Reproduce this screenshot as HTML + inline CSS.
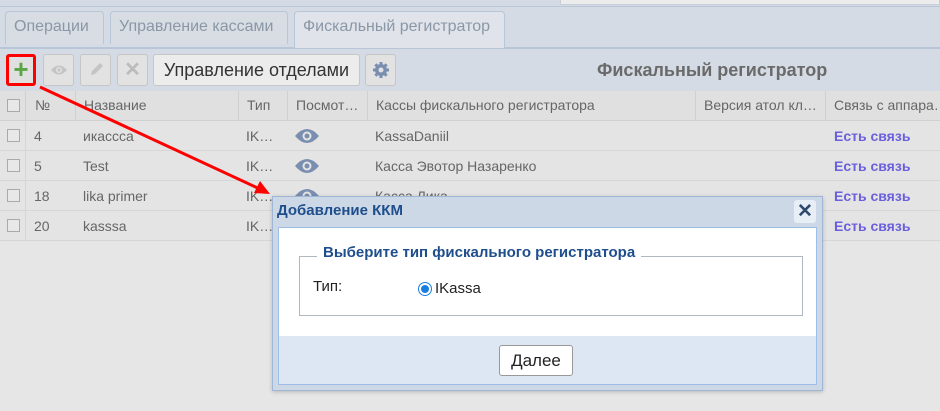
<!DOCTYPE html>
<html><head><meta charset="utf-8"><style>
*{box-sizing:border-box;margin:0;padding:0}
body{width:940px;height:411px;overflow:hidden;background:#e6e6e6;font-family:"Liberation Sans",sans-serif;font-size:14px;color:#666;position:relative}
.abs{position:absolute}
.tab{position:absolute;top:11px;height:33px;border:1px solid #b8c6d8;border-bottom:none;border-radius:4px 4px 0 0;background:#d8dde4;color:#8a97a6;font-size:16px;line-height:30px;padding:0 8px}
.btn{position:absolute;top:54px;height:32px;border:1px solid #c6c6c6;border-radius:3px;background:#e2e2e2;color:#bbb;text-align:center;line-height:30px}
.cell{position:absolute;white-space:nowrap;overflow:hidden}
.row{position:absolute;left:0;width:940px;height:30px;border-bottom:1px solid #d6d6d6;background:#e4e4e4}
.cb{position:absolute;left:7px;top:8px;width:13px;height:13px;border:1px solid #aaa;background:#e8e8e8}
.link{color:#6a5fdc;font-weight:bold}
</style></head><body>
<div class="abs" style="left:0;top:0;width:940px;height:48px;background:#d4dbe4;border-bottom:1px solid #b8c6d8"></div>
<div class="abs" style="left:560px;top:0;width:380px;height:5px;background:#ececec;border:1px solid #c8cfd8;border-top:none"></div>
<div class="abs" style="left:0;top:6px;width:940px;height:1px;background:#b8c6d8"></div>
<div class="tab" style="left:5px;width:99px">Операции</div>
<div class="tab" style="left:110px;width:178px">Управление кассами</div>
<div class="tab" style="left:294px;width:211px;background:#e0e4ea;height:38px">Фискальный регистратор</div>
<div class="abs" style="left:0;top:48px;width:940px;height:43px;background:#d4dbe4;border-top:1px solid #b8c6d8"></div>
<div class="btn" style="left:6px;width:30px;border:3px solid #f00;color:#5aa545;font-size:26px;font-weight:bold;line-height:24px;background:#e0e0e0">+</div>
<div class="btn" style="left:43px;width:31px"><svg width="18" height="12" style="margin-top:9px" viewBox="0 0 18 12"><path d="M1 6Q9-3 17 6Q9 15 1 6Z" fill="#c4c4c4"/><circle cx="9" cy="6" r="3" fill="#e2e2e2"/><circle cx="9" cy="6" r="1.6" fill="#c4c4c4"/></svg></div>
<div class="btn" style="left:80px;width:31px"><svg width="16" height="16" style="margin-top:7px" viewBox="0 0 16 16"><path d="M3 13l1-4 8-8 3 3-8 8z" fill="#c4c4c4"/></svg></div>
<div class="btn" style="left:117px;width:31px;font-size:20px;font-weight:bold">✕</div>
<div class="btn" style="left:153px;width:207px;color:#333;font-size:18px;background:#ececec">Управление отделами</div>
<div class="btn" style="left:365px;width:31px"><svg width="18" height="18" style="margin-top:6px" viewBox="0 0 18 18"><g fill="#7a8fb0"><circle cx="9" cy="9" r="6"/><rect x="7.5" y="1" width="3" height="16"/><rect x="1" y="7.5" width="16" height="3"/><rect x="7.5" y="1" width="3" height="16" transform="rotate(45 9 9)"/><rect x="7.5" y="1" width="3" height="16" transform="rotate(-45 9 9)"/></g><circle cx="9" cy="9" r="2.5" fill="#e2e2e2"/></svg></div>
<div class="abs" style="left:597px;top:60px;font-size:18px;font-weight:bold;color:#6a6a6a">Фискальный регистратор</div>
<div class="abs" style="left:0;top:91px;width:940px;height:30px;background:#e0e0e0;border-bottom:1px solid #d0d0d0"></div>
<div class="cb" style="top:99px"></div>
<div class="cell" style="left:25px;top:91px;height:30px;border-left:1px solid #d0d0d0;padding-left:9px;line-height:29px">№</div>
<div class="cell" style="left:75px;top:91px;height:30px;border-left:1px solid #d0d0d0;padding-left:8px;line-height:29px;width:163px">Название</div>
<div class="cell" style="left:238px;top:91px;height:30px;border-left:1px solid #d0d0d0;padding-left:8px;line-height:29px">Тип</div>
<div class="cell" style="left:287px;top:91px;height:30px;border-left:1px solid #d0d0d0;padding-left:8px;line-height:29px;width:80px">Посмот…</div>
<div class="cell" style="left:367px;top:91px;height:30px;border-left:1px solid #d0d0d0;padding-left:8px;line-height:29px;width:328px">Кассы фискального регистратора</div>
<div class="cell" style="left:695px;top:91px;height:30px;border-left:1px solid #d0d0d0;padding-left:8px;line-height:29px;width:130px">Версия атол кл…</div>
<div class="cell" style="left:825px;top:91px;height:30px;border-left:1px solid #d0d0d0;padding-left:8px;line-height:29px;width:115px">Связь с аппара…</div>

<div class="row" style="top:121px"><div class="cb"></div><span class="cell" style="left:34px;top:7px">4</span><span class="cell" style="left:83px;top:7px">икассса</span><span class="cell" style="left:246px;top:7px">IK…</span><span class="cell" style="left:375px;top:7px">KassaDaniil</span><span class="cell link" style="left:834px;top:7px">Есть связь</span></div>
<div class="row" style="top:151px"><div class="cb"></div><span class="cell" style="left:34px;top:7px">5</span><span class="cell" style="left:83px;top:7px">Test</span><span class="cell" style="left:246px;top:7px">IK…</span><span class="cell" style="left:375px;top:7px">Касса Эвотор Назаренко</span><span class="cell link" style="left:834px;top:7px">Есть связь</span></div>
<div class="row" style="top:181px"><div class="cb"></div><span class="cell" style="left:34px;top:7px">18</span><span class="cell" style="left:83px;top:7px">lika primer</span><span class="cell" style="left:246px;top:7px">IK…</span><span class="cell" style="left:375px;top:7px">Касса Лика</span><span class="cell link" style="left:834px;top:7px">Есть связь</span></div>
<div class="row" style="top:211px"><div class="cb"></div><span class="cell" style="left:34px;top:7px">20</span><span class="cell" style="left:83px;top:7px">kasssa</span><span class="cell" style="left:246px;top:7px">IK…</span><span class="cell link" style="left:834px;top:7px">Есть связь</span></div>
<div class="abs" style="left:25px;top:121px;width:1px;height:120px;background:#d6d6d6"></div>
<svg class="abs" style="left:294px;top:126px" width="26" height="80" viewBox="0 0 26 80"><g fill="#7a8fb0"><path d="M1 10Q13-4 25 10Q13 24 1 10Z"/><path d="M1 40Q13 26 25 40Q13 54 1 40Z"/><path d="M1 70Q13 56 25 70Q13 84 1 70Z"/></g><g fill="#e4e4e4"><circle cx="13" cy="10" r="4.5"/><circle cx="13" cy="40" r="4.5"/><circle cx="13" cy="70" r="4.5"/></g><g fill="#7a8fb0"><circle cx="13" cy="10" r="2.5"/><circle cx="13" cy="40" r="2.5"/><circle cx="13" cy="70" r="2.5"/></g></svg>

<svg class="abs" style="left:0;top:0" width="940" height="411"><line x1="40" y1="87" x2="262" y2="190" stroke="#f00" stroke-width="3"/><path d="M270 194L254 193L260 181Z" fill="#f00"/></svg>

<div class="abs" style="left:272px;top:196px;width:551px;height:195px;background:#ccd8e6;border:1px solid #9fb6d4;box-shadow:0 1px 4px rgba(0,0,0,.2)">
<div class="abs" style="left:4px;top:5px;font-size:15px;font-weight:bold;color:#1f4e8c">Добавление ККМ</div>
<div class="abs" style="left:521px;top:3px;width:22px;height:23px;background:#e8eef6;border-radius:3px;color:#2e4a6e;font-size:19px;font-weight:bold;text-align:center;line-height:23px">✕</div>
<div class="abs" style="left:5px;top:30px;width:539px;height:158px;border:1px solid #9fbde6;background:#dde6f3">
<div class="abs" style="left:0;top:0;width:537px;height:108px;background:#fff"></div>
<div class="abs" style="left:20px;top:28px;width:504px;height:60px;border:1px solid #b0b8c4"></div>
<div class="abs" style="left:38px;top:16px;padding:0 6px;background:#fff;color:#1f4e8c;font-weight:bold;font-size:15px">Выберите тип фискального регистратора</div>
<div class="abs" style="left:34px;top:50px;color:#222;font-size:15px">Тип:</div>
<div class="abs" style="left:140px;top:55px;width:12px;height:12px;border-radius:50%;background:#1a7ee0;border:2px solid #fff;box-shadow:0 0 0 1px #1a7ee0"></div>
<div class="abs" style="left:156px;top:52px;color:#222;font-size:15px">IKassa</div>
<div class="abs" style="left:220px;top:117px;width:74px;height:31px;border:1px solid #999;border-radius:3px;background:#fff;color:#222;font-size:17px;text-align:center;line-height:29px">Далее</div>
</div></div>
</body></html>
